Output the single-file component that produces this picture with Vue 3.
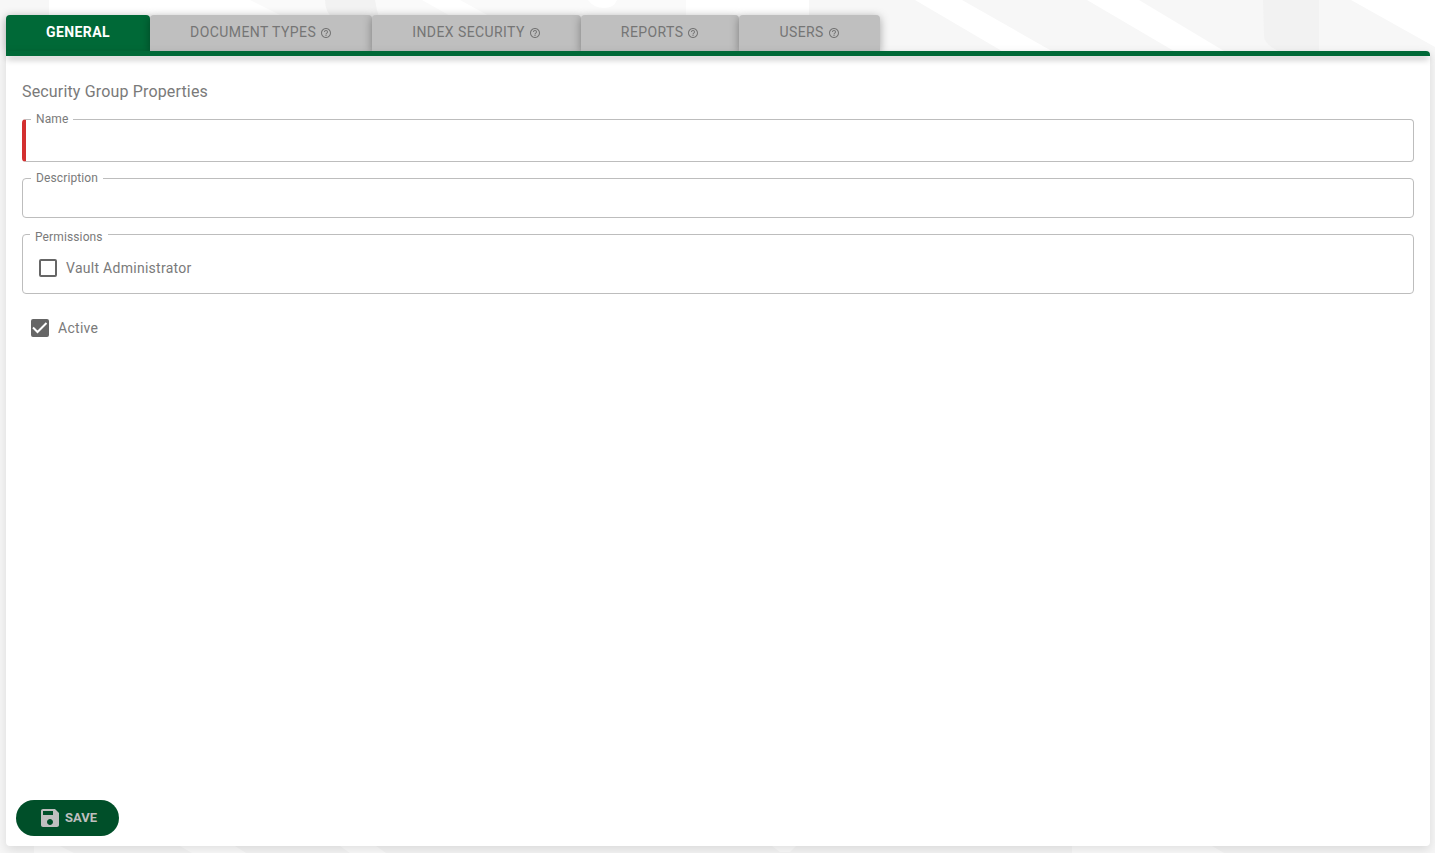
<template>
  <div class="page">
    <!-- decorative backdrop -->
    <svg class="page__bg" viewBox="0 0 1435 853" preserveAspectRatio="none" aria-hidden="true">
      <rect width="1435" height="853" fill="#f7f7f7" />
      <path d="M250 0H915V54H300Z" fill="#fafafa" />
      <path d="M809 0H915V54H809Z" fill="#f7f7f7" />
      <path d="M49 0H250L330 40H49ZM422 0H460L540 44H500ZM588 0H617Q614 8 604 8T588 0ZM686 0H809V50H686Z" fill="#fff" />
      <path d="M915 0H962L1057 54H1007ZM1087 0H1139L1229 54H1179ZM1351 0H1435V47Z" fill="#fff" />
      <path d="M325 0H375Q377 12 380 20H334Q325 12 325 0ZM1263 0H1319V54H1286Q1264 46 1264 36Z" fill="#f2f2f2" />
      <path d="M34 846H60L74 853H34ZM180 846H235L246 853H192ZM340 846H376L386 853H350ZM772 846H796L790 852H780ZM1072 846H1212L1224 853H1072Z" fill="#fdfdfd" />
    </svg>

    <div class="tabs" role="tablist">
      <button
        v-for="tab in tabs"
        :key="tab.id"
        type="button"
        role="tab"
        class="tab"
        :class="{ 'tab--active': tab.id === activeTab }"
        :aria-selected="tab.id === activeTab"
        @click="activeTab = tab.id"
      >
        {{ tab.label }}
        <svg v-if="tab.help" class="tab__help" viewBox="0 0 24 24" aria-hidden="true">
          <path d="M11 18h2v-2h-2v2zm1-16C6.48 2 2 6.48 2 12s4.48 10 10 10 10-4.48 10-10S17.52 2 12 2zm0 18c-4.41 0-8-3.59-8-8s3.59-8 8-8 8 3.59 8 8-3.59 8-8 8zm0-14c-2.21 0-4 1.79-4 4h2c0-1.1.9-2 2-2s2 .9 2 2c0 2-3 1.75-3 5h2c0-2.25 3-2.5 3-5 0-2.21-1.79-4-4-4z" />
        </svg>
      </button>
    </div>

    <form class="panel" @submit.prevent>
      <div class="panel__body">
        <h1 class="title">Security Group Properties</h1>

        <div class="field field--required">
          <label class="field__label" for="group-name">Name</label>
          <input id="group-name" v-model="group.name" class="field__input" type="text" required />
        </div>

        <div class="field">
          <label class="field__label" for="group-description">Description</label>
          <input id="group-description" v-model="group.description" class="field__input" type="text" />
        </div>

        <fieldset class="permissions">
          <legend class="field__label">Permissions</legend>
          <label class="check">
            <span class="check__box">
              <input v-model="group.vaultAdmin" class="check__input" type="checkbox" />
              <svg v-if="group.vaultAdmin" class="check__mark" viewBox="0 0 18 18" aria-hidden="true">
                <path d="M2 8.5L6.5 13L15.5 4" />
              </svg>
            </span>
            Vault Administrator
          </label>
        </fieldset>

        <label class="check check--active">
          <span class="check__box">
            <input v-model="group.active" class="check__input" type="checkbox" />
            <svg v-if="group.active" class="check__mark" viewBox="0 0 18 18" aria-hidden="true">
              <path d="M2 8.5L6.5 13L15.5 4" />
            </svg>
          </span>
          Active
        </label>
      </div>

      <div class="panel__footer">
        <button class="save" type="submit">
          <svg class="save__icon" viewBox="0 0 24 24" aria-hidden="true">
            <path d="M17 3H5c-1.11 0-2 .9-2 2v14c0 1.1.89 2 2 2h14c1.1 0 2-.9 2-2V7l-4-4zm-5 16c-1.66 0-3-1.34-3-3s1.34-3 3-3 3 1.34 3 3-1.34 3-3 3zm3-10H5V5h10v4z" />
          </svg>
          SAVE
        </button>
      </div>
    </form>
  </div>
</template>

<script setup>
import { reactive, ref } from 'vue'

const tabs = [
  { id: 'general', label: 'GENERAL', help: false },
  { id: 'documentTypes', label: 'DOCUMENT TYPES', help: true },
  { id: 'indexSecurity', label: 'INDEX SECURITY', help: true },
  { id: 'reports', label: 'REPORTS', help: true },
  { id: 'users', label: 'USERS', help: true }
]

const activeTab = ref('general')

const group = reactive({
  name: '',
  description: '',
  vaultAdmin: false,
  active: true
})
</script>

<style>
body {
  margin: 0;
}
</style>

<style scoped>
.page {
  position: relative;
  isolation: isolate;
  box-sizing: border-box;
  display: flex;
  flex-direction: column;
  min-height: 100vh;
  padding: 15px 5px 7px 6px;
  font-family: Roboto, sans-serif;
  color: #7a7a7a;
}

.page__bg {
  position: absolute;
  inset: 0;
  z-index: -1;
  width: 100%;
  height: 100%;
}

.tabs {
  display: flex;
}

.tab {
  display: flex;
  align-items: center;
  gap: 4px;
  height: 36px;
  padding: 0 40px 2px;
  border: 0;
  border-radius: 4px 4px 0 0;
  background: #bfbfbf;
  box-shadow: 0 2px 10px rgba(0, 0, 0, .35);
  color: #757575;
  font: 400 14px/20px Roboto, sans-serif;
  letter-spacing: 0.03em;
  cursor: pointer;
}

.tab--active {
  background: #006937;
  color: #fff;
  font-weight: 700;
}

.tab__help {
  width: 12px;
  height: 12px;
  margin-top: 2px;
  fill: currentColor;
}

.panel {
  position: relative;
  flex: 1;
  display: flex;
  flex-direction: column;
  border-radius: 0 4px 4px 4px;
  background: #fff;
  box-shadow: 0 4px 12px rgba(0, 0, 0, .12);
}

.panel::before {
  content: '';
  height: 5px;
  border-radius: 0 4px 0 0;
  background: #006937;
  box-shadow: 0 4px 6px -1px rgba(0, 0, 0, .35);
}

.panel__body {
  flex: 1;
  padding: 24px 16px;
}

.title {
  margin: 0 0 15px;
  font-size: 16px;
  font-weight: 400;
  line-height: 24px;
  letter-spacing: 0.01em;
}

.field {
  position: relative;
  margin-bottom: 16px;
}

.field__label {
  padding: 0 5px;
  background: #fff;
  font-size: 12px;
  line-height: 16px;
  letter-spacing: 0.01em;
}

.field > .field__label {
  position: absolute;
  top: -8px;
  left: 9px;
}

.field__input {
  display: block;
  box-sizing: border-box;
  width: 100%;
  height: 40px;
  padding: 0 12px;
  border: 1px solid #bdbdbd;
  border-radius: 4px;
  background: #fff;
  color: #424242;
  font: 400 14px/20px Roboto, sans-serif;
}

.field--required .field__input {
  height: 43px;
  border-left: 4px solid #d32f2f;
}

.permissions {
  position: relative;
  min-width: 0;
  margin: 0;
  padding: 21px 16px 13px;
  border: 1px solid #bdbdbd;
  border-radius: 4px;
}

.permissions > .field__label {
  position: absolute;
  top: -6px;
  left: 7px;
}

.check {
  display: flex;
  align-items: center;
  gap: 9px;
  width: fit-content;
  height: 24px;
  font-size: 14px;
  line-height: 20px;
  letter-spacing: 0.02em;
}

.check--active {
  margin: 22px 9px 0;
}

.check__box {
  display: grid;
  width: 18px;
  height: 18px;
}

.check__input {
  grid-area: 1 / 1;
  appearance: none;
  width: 18px;
  height: 18px;
  margin: 0;
  border: 2px solid #666;
  border-radius: 2px;
}

.check__input:checked {
  background: #666;
}

.check__mark {
  grid-area: 1 / 1;
  z-index: 1;
  fill: none;
  stroke: #fff;
  stroke-width: 2;
  pointer-events: none;
}

.panel__footer {
  padding: 10px;
}

.save {
  display: flex;
  align-items: center;
  gap: 3px;
  height: 36px;
  padding: 0 22px;
  border: 0;
  border-radius: 18px;
  background: #004f29;
  color: #bfbfbf;
  font: 700 13px/20px Roboto, sans-serif;
  cursor: pointer;
}

.save__icon {
  width: 24px;
  height: 24px;
  fill: currentColor;
}
</style>
